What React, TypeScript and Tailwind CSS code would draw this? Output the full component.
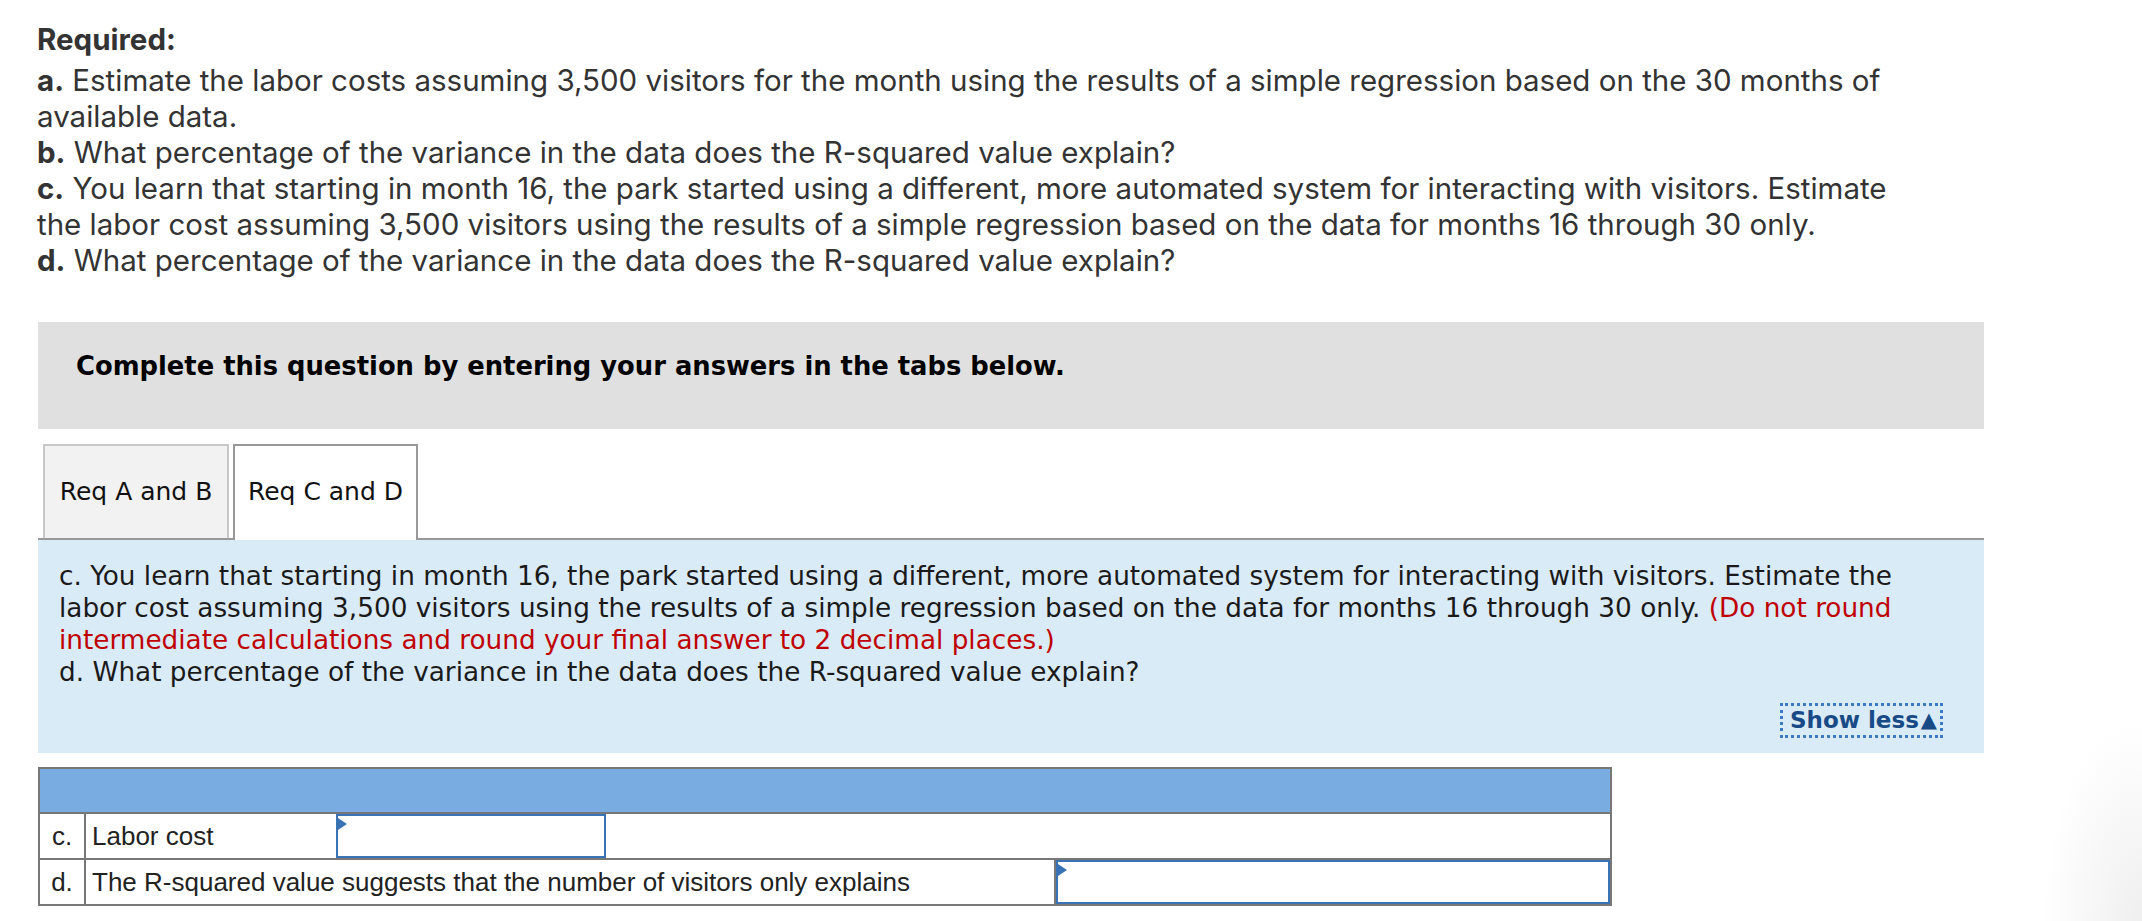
import React from 'react';

const proxima = { fontFamily: 'Inter, "Open Sans", sans-serif' };
const verdana = { fontFamily: '"DejaVu Sans", Verdana, sans-serif' };
const arial = { fontFamily: '"Liberation Sans", Arial, sans-serif' };

function AnswerInput({ className }: { className: string }) {
  return (
    <div className={'relative border-2 border-[#3a72b6] bg-white ' + className}>
      <svg
        className="absolute left-0 top-[2px]"
        width="9"
        height="12"
        viewBox="0 0 9 12">
        <polygon points="0,0 9,6 0,12" fill="#3a72b6" />
      </svg>
    </div>
  );
}

export default function App(): JSX.Element {
  return (
    <div className="relative min-h-[921px] w-full bg-white bg-[radial-gradient(ellipse_100px_200px_at_100%_100%,#efefef,#ffffff)]">
      <div
        className="pl-[37px] pt-[21px] text-[29.5px] leading-[36px] text-[#333]"
        style={proxima}>
        <p className="mb-[5px] font-bold">Required:</p>
        <p>
          <b>a.</b> Estimate the labor costs assuming 3,500 visitors for the
          month using the results of a simple regression based on the 30 months
          of
          <br />
          available data.
        </p>
        <p>
          <b>b.</b> What percentage of the variance in the data does the
          R-squared value explain?
        </p>
        <p>
          <b>c.</b> You learn that starting in month 16, the park started using
          a different, more automated system for interacting with visitors.
          Estimate
          <br />
          the labor cost assuming 3,500 visitors using the results of a simple
          regression based on the data for months 16 through 30 only.
        </p>
        <p>
          <b>d.</b> What percentage of the variance in the data does the
          R-squared value explain?
        </p>
      </div>

      <div className="ml-[38px] w-[1946px]" style={verdana}>
        <div className="mt-[44px] h-[107px] bg-[#e0e0e0] pl-[38px] pt-[28px]">
          <p className="text-[25.8px] font-bold leading-[32px] text-black">
            Complete this question by entering your answers in the tabs below.
          </p>
        </div>

        <div className="mt-[15px] flex h-[96px] items-end gap-[4px] border-b-2 border-[#999] pl-[5px]">
          <div className="flex h-[94px] w-[186px] items-center justify-center border-2 border-b-0 border-[#c8c8c8] bg-[#f2f2f2] text-[25px] text-[#111]">
            Req A and B
          </div>
          <div className="-mb-[2px] flex h-[96px] w-[185px] items-center justify-center border-2 border-b-0 border-[#999] bg-white pb-[2px] text-[25px] text-[#111]">
            Req C and D
          </div>
        </div>

        <div className="h-[213px] bg-[#daebf8] px-[21px] pt-[20px] text-[26.3px] leading-[32px] text-[#1a1a1a]">
          <p>
            c. You learn that starting in month 16, the park started using a
            different, more automated system for interacting with visitors.
            Estimate the
            <br />
            labor cost assuming 3,500 visitors using the results of a simple
            regression based on the data for months 16 through 30 only.{' '}
            <span className="text-[#c00000]">
              (Do not round
              <br />
              intermediate calculations and round your final answer to 2 decimal
              places.)
            </span>
          </p>
          <p>
            d. What percentage of the variance in the data does the R-squared
            value explain?
          </p>
          <div className="mt-[15px] flex justify-end pr-[20px]">
            <button className="flex h-[35px] items-center border-[3px] border-dotted border-[#3b7bc6] pl-[7px] pr-[3px] text-[23px] font-bold leading-none text-[#184a86]">
              Show less
              <span className="ml-[2px] text-[21px]">▲</span>
            </button>
          </div>
        </div>
      </div>

      <div
        className="ml-[38px] mt-[14px] w-[1574px] border-2 border-[#777] text-[26px] text-[#222]"
        style={arial}>
        <div className="h-[43px] bg-[#79ace0]" />
        <div className="flex h-[46px] border-t-2 border-[#777]">
          <div className="flex w-[46px] items-center justify-center border-r-2 border-[#777]">
            c.
          </div>
          <div className="flex w-[250px] items-center pl-[6px]">
            Labor cost
          </div>
          <AnswerInput className="w-[270px]" />
          <div className="flex-1" />
        </div>
        <div className="flex h-[46px] border-t-2 border-[#777]">
          <div className="flex w-[46px] items-center justify-center border-r-2 border-[#777]">
            d.
          </div>
          <div className="flex flex-1 items-center border-r-2 border-[#777] pl-[6px]">
            The R-squared value suggests that the number of visitors only
            explains
          </div>
          <AnswerInput className="w-[554px]" />
        </div>
      </div>
    </div>
  );
}
